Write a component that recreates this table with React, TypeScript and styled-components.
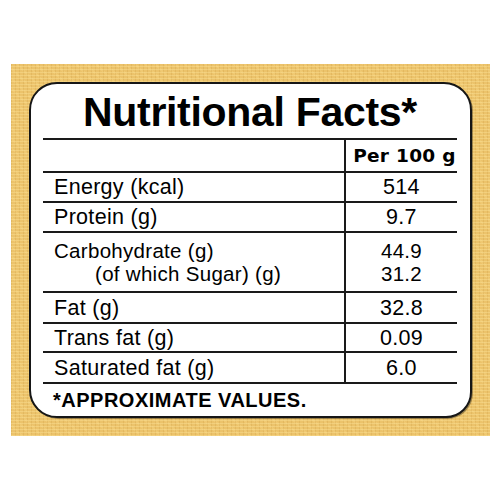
import React from "react";
import styled, { createGlobalStyle } from "styled-components";

const Global = createGlobalStyle`
  html, body { margin: 0; padding: 0; background: #ffffff; }
  body { font-family: "Liberation Sans", Arial, sans-serif; color: #000; }
`;

const Page = styled.div`
  width: 500px;
  height: 500px;
  padding: 64px 10px 0 11px;
  box-sizing: border-box;
`;

const Panel = styled.div`
  width: 479px;
  height: 372px;
  padding: 18px;
  box-sizing: border-box;
  background-color: #ecc36b;
  background-image:
    repeating-linear-gradient(0deg, rgba(255, 232, 160, 0.35) 0 1px, transparent 1px 3px),
    repeating-linear-gradient(90deg, rgba(185, 135, 45, 0.18) 0 1px, transparent 1px 4px),
    repeating-linear-gradient(45deg, rgba(250, 218, 135, 0.25) 0 2px, transparent 2px 7px);
`;

const Card = styled.div`
  height: 100%;
  box-sizing: border-box;
  background: #ffffff;
  border: 2px solid #161616;
  border-radius: 28px 28px 26px 28px;
  box-shadow: 1px 1px 0 rgba(0, 0, 0, 0.35);
  padding: 0 13px 0 12px;
  display: flex;
  flex-direction: column;
`;

const Title = styled.h1`
  margin: 0;
  height: 54px;
  box-sizing: border-box;
  padding-top: 3px;
  line-height: 51px;
  font-size: 41px;
  font-weight: 700;
  letter-spacing: -0.3px;
  text-align: center;
  font-family: "Liberation Sans", Arial, sans-serif;
`;

const Table = styled.div`
  display: grid;
  grid-template-columns: 301px 1fr;
`;

const Row = styled.div<{ $h: number; $last?: boolean }>`
  display: contents;
  & > * {
    height: ${(p) => p.$h}px;
    box-sizing: border-box;
    border-top: 2px solid #1a1a1a;
    ${(p) => (p.$last ? "border-bottom: 2px solid #1a1a1a;" : "")}
  }
`;

const Label = styled.div`
  display: flex;
  flex-direction: column;
  justify-content: center;
  padding-left: 11px;
  font-size: 21.5px;
  letter-spacing: 0.3px;
  line-height: 24px;
  white-space: nowrap;
`;

const SubLine = styled.span`
  padding-left: 41px;
`;

const Value = styled.div<{ $bold?: boolean }>`
  display: flex;
  flex-direction: column;
  justify-content: center;
  align-items: center;
  border-left: 2px solid #1a1a1a;
  font-size: ${(p) => (p.$bold ? "18.5px" : "21.5px")};
  font-weight: ${(p) => (p.$bold ? 700 : 400)};
  font-family: ${(p) =>
    p.$bold ? '"DejaVu Sans", "Liberation Sans", sans-serif' : '"Liberation Sans", Arial, sans-serif'};
  letter-spacing: 0.3px;
  line-height: 24px;
  padding-left: ${(p) => (p.$bold ? "6px" : "0")};
`;

const Line = styled.span`
  display: block;
  height: 23px;
  line-height: 23px;
  font-size: 20.5px;
`;

const Footer = styled.div`
  height: 32px;
  line-height: 32px;
  padding-left: 10px;
  font-size: 20px;
  font-weight: 700;
  letter-spacing: 0.5px;
`;

type Item = { label: string[]; value: string[]; h: number };

const items: Item[] = [
  { label: ["Energy (kcal)"], value: ["514"], h: 30 },
  { label: ["Protein (g)"], value: ["9.7"], h: 30 },
  { label: ["Carbohydrate (g)", "(of which Sugar) (g)"], value: ["44.9", "31.2"], h: 60 },
  { label: ["Fat (g)"], value: ["32.8"], h: 31 },
  { label: ["Trans fat (g)"], value: ["0.09"], h: 29 },
  { label: ["Saturated fat (g)"], value: ["6.0"], h: 33 },
];

export default function App() {
  return (
    <>
      <Global />
      <Page>
        <Panel>
          <Card>
            <Title>Nutritional Facts*</Title>
            <Table>
              <Row $h={33}>
                <Label />
                <Value $bold>Per 100 g</Value>
              </Row>
              {items.map((it, i) => (
                <Row key={i} $h={it.h} $last={i === items.length - 1}>
                  <Label>
                    {it.label.length === 1 ? (
                      <span>{it.label[0]}</span>
                    ) : (
                      it.label.map((l, j) =>
                        j === 0 ? <Line key={j}>{l}</Line> : <Line key={j}><SubLine>{l}</SubLine></Line>
                      )
                    )}
                  </Label>
                  <Value>
                    {it.value.length === 1 ? (
                      <span>{it.value[0]}</span>
                    ) : (
                      it.value.map((v, j) => <Line key={j}>{v}</Line>)
                    )}
                  </Value>
                </Row>
              ))}
            </Table>
            <Footer>*APPROXIMATE VALUES.</Footer>
          </Card>
        </Panel>
      </Page>
    </>
  );
}
